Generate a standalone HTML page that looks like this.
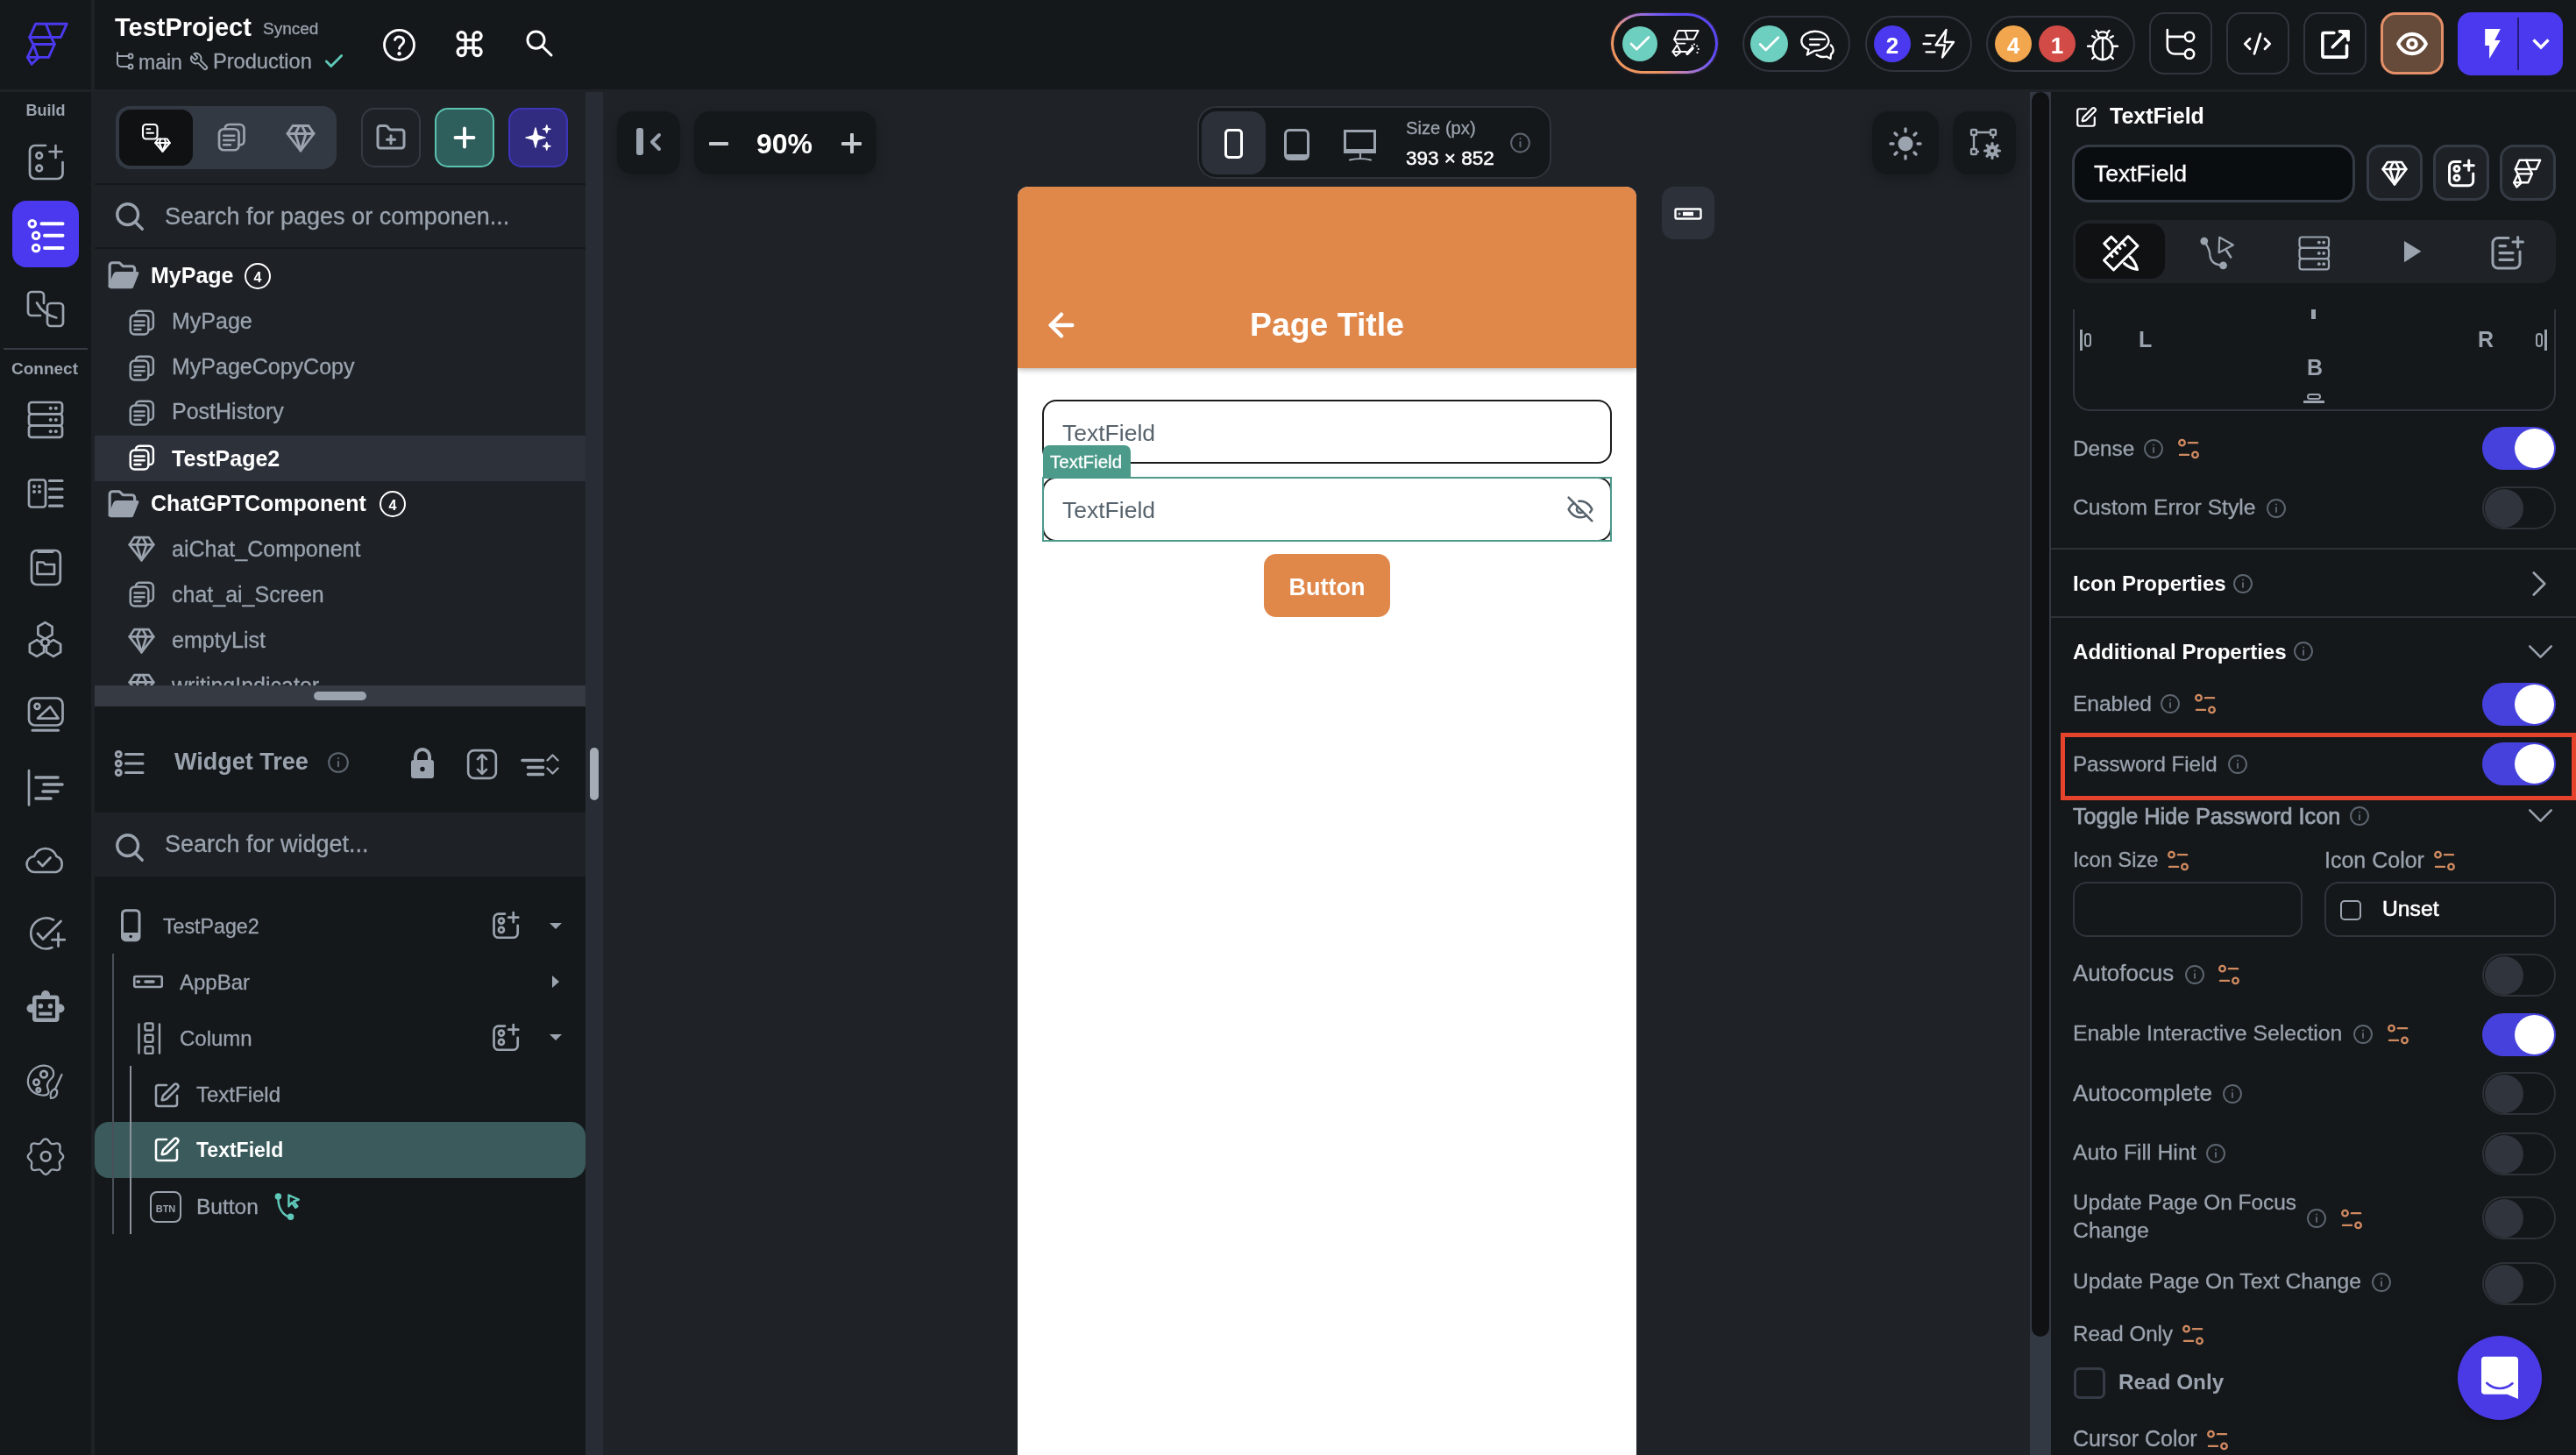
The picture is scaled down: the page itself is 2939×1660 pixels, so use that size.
<!DOCTYPE html>
<html><head><meta charset="utf-8"><style>
html,body{margin:0;padding:0;width:2939px;height:1660px;overflow:hidden;background:#15181b}
.a{position:absolute}
.t{font-family:"Liberation Sans",sans-serif;white-space:nowrap;line-height:1;will-change:transform}
svg{overflow:visible}
</style></head><body>
<div class="a" style="left:0px;top:0px;width:2939px;height:1660px;background:#15181b;"></div>
<div class="a" style="left:104px;top:102px;width:564px;height:1558px;background:#1e2227;"></div>
<div class="a" style="left:104px;top:0px;width:4px;height:102px;background:#1e2227;"></div>
<div class="a" style="left:0px;top:102px;width:2939px;height:3px;background:#1f2328;"></div>
<div class="a" style="left:668px;top:105px;width:20px;height:1555px;background:#282c34;"></div>
<div class="a" style="left:688px;top:102px;width:1628px;height:1558px;background:#1f2328;"></div>
<div class="a" style="left:2316px;top:105px;width:24px;height:1555px;background:#333943;"></div>
<div class="a" style="left:2318px;top:105px;width:20px;height:1420px;background:#0f1113;border-radius:10px;"></div>
<div class="a" style="left:2340px;top:105px;width:599px;height:1555px;background:#15181b;"></div>
<svg class="a" style="left:25px;top:20px;" width="60" height="60" viewBox="0 0 60 60"><g fill="none" stroke="#4b39ef" stroke-width="2.9" stroke-linecap="round" stroke-linejoin="round"><path d="M15.7 7.2H51.2L44.3 22.5H8.7Z"/><path d="M27.4 7.2 33.4 22.5"/><path d="M8.7 22.5 12.8 30.5H37.3L33.4 22.5"/><path d="M37.3 30.5 30.5 45.4H6.4L12.8 32"/><path d="M13.6 32.6 18.4 45.4"/><path d="M6.4 45.4 11.1 53.2 18.4 46.2"/></g></svg>
<div class="a t" style="left:131px;top:16.5px;font-size:29px;color:#ffffff;font-weight:700;">TestProject</div>
<div class="a t" style="left:300px;top:22.9px;font-size:19px;color:#9aa3ae;-webkit-text-stroke:0.3px #9aa3ae;">Synced</div>
<svg class="a" style="left:130px;top:58px;" width="24" height="24" viewBox="0 0 24 24"><g fill="none" stroke="#9aa3ae" stroke-width="2" stroke-linecap="round" stroke-linejoin="round"><path d="M4 2v12a4 4 0 0 0 4 4h9"/><path d="M4 6h13"/><circle cx="19" cy="6" r="2.5"/><circle cx="19" cy="18" r="2.5"/></g></svg>
<div class="a t" style="left:158px;top:59.5px;font-size:23px;color:#9aa3ae;-webkit-text-stroke:0.3px #9aa3ae;">main</div>
<svg class="a" style="left:216px;top:59px;" width="23" height="23" viewBox="0 0 24 24"><g fill="none" stroke="#9aa3ae" stroke-width="2" stroke-linecap="round" stroke-linejoin="round"><g transform="translate(24,0) scale(-1,1)"><path d="M14.7 6.3a1 1 0 0 0 0 1.4l1.6 1.6a1 1 0 0 0 1.4 0l3.77-3.77a6 6 0 0 1-7.94 7.94l-6.91 6.91a2.12 2.12 0 0 1-3-3l6.91-6.91a6 6 0 0 1 7.94-7.94l-3.76 3.76z"/></g></g></svg>
<div class="a t" style="left:243px;top:59.0px;font-size:23.6px;color:#9aa3ae;-webkit-text-stroke:0.3px #9aa3ae;">Production</div>
<svg class="a" style="left:368px;top:57px;" width="26" height="26" viewBox="0 0 24 24"><g fill="none" stroke="#5fc9b9" stroke-width="2.6" stroke-linecap="round" stroke-linejoin="round"><path d="M20 6 9 17l-5-5"/></g></svg>
<svg class="a" style="left:420px;top:20px" width="230" height="65" viewBox="420 20 230 65"><g fill="none" stroke="#fff" stroke-linecap="round" stroke-linejoin="round"><circle cx="455.5" cy="51.3" r="17" stroke-width="2.8"/><path d="M450.5 45.5a5.3 5.3 0 0 1 10.3 1.6c0 3.6-5.3 4.6-5.3 8.2" stroke-width="2.8"/><circle cx="455.6" cy="61.3" r="2.2" fill="#fff" stroke="none"/><g transform="translate(517.6 32.1) scale(1.5)"><path d="M15 6v12a3 3 0 1 0 3-3H6a3 3 0 1 0 3 3V6a3 3 0 1 0-3 3h12a3 3 0 1 0-3-3" stroke-width="2.2"/></g><circle cx="611.5" cy="45.6" r="9.6" stroke-width="2.9"/><path d="M618.6 52.7 629 63" stroke-width="3"/></g></svg>
<div class="a" style="left:1838px;top:15px;width:122px;height:69px;border-radius:35px;background:linear-gradient(45deg,#f39a5a 0%,#ee9462 30%,#b77fc0 45%,#7b5ef0 62%,#5b48f5 75%,#5b48f5 100%);box-shadow:0 0 3px rgba(170,120,200,.3)"></div>
<div class="a" style="left:1841px;top:18px;width:116px;height:63px;background:#15181b;border-radius:32px;"></div>
<div class="a" style="left:1851px;top:30px;width:40px;height:40px;border-radius:50%;background:#6dcfbf"></div>
<svg class="a" style="left:1856px;top:35px;" width="30" height="30" viewBox="0 0 24 24"><g fill="none" stroke="#ffffff" stroke-width="2.1" stroke-linecap="round" stroke-linejoin="round"><path d="M20 6 9 17l-5-5"/></g></svg>
<svg class="a" style="left:1900px;top:30px" width="45" height="40" viewBox="0 0 45 40"><g fill="none" stroke="#fff" stroke-width="1.9" stroke-linecap="round" stroke-linejoin="round"><path d="M14.6 5H37.6L32.5 14.8H10.1Z"/><path d="M22.5 5 25.6 14.8"/><path d="M10.1 14.8 13.2 19.6H22.5"/><path d="M13.4 21.5 8.4 29H24"/><path d="M13.6 21.8 17.3 29"/><path d="M8.4 29 12.2 33.8 17.3 29.5"/><path d="M25 31.2 31 25" stroke-width="3.6"/></g><g fill="#fff"><circle cx="33" cy="20.5" r="1.1"/><circle cx="36.2" cy="22.5" r="1.1"/><circle cx="37.8" cy="26" r="1.1"/><circle cx="36.5" cy="30" r="1.1"/><circle cx="30.5" cy="22" r="1.1"/></g></svg>
<div class="a" style="left:1988px;top:18px;width:123px;height:64px;border:2px solid #30353d;box-sizing:border-box;border-radius:32px;"></div>
<div class="a" style="left:1997px;top:29px;width:43px;height:42px;border-radius:50%;background:#6dcfbf"></div>
<svg class="a" style="left:2003px;top:35px;" width="31" height="31" viewBox="0 0 24 24"><g fill="none" stroke="#ffffff" stroke-width="2.1" stroke-linecap="round" stroke-linejoin="round"><path d="M20 6 9 17l-5-5"/></g></svg>
<svg class="a" style="left:2054px;top:32px" width="42" height="38" viewBox="0 0 42 38"><g fill="none" stroke="#fff" stroke-width="2.3" stroke-linecap="round" stroke-linejoin="round"><path d="M9.5 24.5A15.5 11 0 1 1 16.5 25.8L7.8 30.6Z"/><path d="M11 12.8H28M11 19H21.4"/><path d="M34.8 19.5C38.5 22.5 38.5 27.5 35 30L34.5 35 30 32.5C26 33.5 22 33 18.5 30.5"/></g></svg>
<div class="a" style="left:2128px;top:18px;width:122px;height:64px;border:2px solid #30353d;box-sizing:border-box;border-radius:32px;"></div>
<div class="a" style="left:2138px;top:29px;width:42px;height:42px;border-radius:50%;background:#4b39ef"></div>
<div class="a t" style="left:1159px;width:2000px;text-align:center;top:39.0px;font-size:26px;color:#ffffff;font-weight:700;">2</div>
<svg class="a" style="left:2190px;top:30px" width="44" height="40" viewBox="0 0 44 40"><g fill="none" stroke="#fff" stroke-width="2.3" stroke-linecap="round" stroke-linejoin="round"><path d="M30.5 4 18.5 21.5H29L26 35.5 39 18H28.5Z"/><path d="M7.5 10.5H17.5M4.5 20H12.5M7.5 29.3H17.5"/></g></svg>
<div class="a" style="left:2266px;top:18px;width:170px;height:64px;border:2px solid #30353d;box-sizing:border-box;border-radius:32px;"></div>
<div class="a" style="left:2276px;top:29px;width:42px;height:42px;border-radius:50%;background:#f2a64e"></div>
<div class="a t" style="left:1297px;width:2000px;text-align:center;top:39.0px;font-size:26px;color:#ffffff;font-weight:700;">4</div>
<div class="a" style="left:2326px;top:29px;width:42px;height:42px;border-radius:50%;background:#d24b47"></div>
<div class="a t" style="left:1347px;width:2000px;text-align:center;top:39.0px;font-size:26px;color:#ffffff;font-weight:700;">1</div>
<svg class="a" style="left:2378px;top:30px" width="42" height="42" viewBox="0 0 42 42"><g fill="none" stroke="#fff" stroke-width="2.4" stroke-linecap="round" stroke-linejoin="round"><ellipse cx="21" cy="25.5" rx="11.3" ry="12.5"/><ellipse cx="21" cy="9.8" rx="5.3" ry="3.4"/><path d="M21 13.5V37.5"/><path d="M13.6 5 16 8M28.4 5 26 8M9.2 11.2 12.3 12.9M32.8 11.2 29.7 12.9M4 22.8H9.5M38 22.8H32.5M9.2 36.9 12.3 34.2M32.8 36.9 29.7 34.2"/></g></svg>
<div class="a" style="left:2452px;top:14px;width:72px;height:71px;border:2px solid #30353d;box-sizing:border-box;border-radius:17px;"></div>
<div class="a" style="left:2540px;top:14px;width:72px;height:71px;border:2px solid #30353d;box-sizing:border-box;border-radius:17px;"></div>
<div class="a" style="left:2628px;top:14px;width:72px;height:71px;border:2px solid #30353d;box-sizing:border-box;border-radius:17px;"></div>
<svg class="a" style="left:2460px;top:25px" width="50" height="50" viewBox="2460 25 50 50"><g fill="none" stroke="#fff" stroke-width="2.6" stroke-linecap="round"><path d="M2472.8 34V53.5a8 8 0 0 0 8 8H2492.7M2472.8 41.9H2492.7"/><circle cx="2498" cy="41.9" r="5.2"/><circle cx="2498" cy="61.6" r="5.2"/></g></svg>
<svg class="a" style="left:2557px;top:33px;" width="37" height="34" viewBox="0 0 24 24"><g fill="none" stroke="#ffffff" stroke-width="2" stroke-linecap="round" stroke-linejoin="round"><path d="m18 16 4-4-4-4"/><path d="m6 8-4 4 4 4"/><path d="m14.5 4-5 16"/></g></svg>
<svg class="a" style="left:2645px;top:31px;" width="39" height="39" viewBox="0 0 24 24"><g fill="none" stroke="#ffffff" stroke-width="2.2" stroke-linecap="round" stroke-linejoin="round"><path d="M15 3h6v6" fill="#fff"/><path d="M10 14 21 3"/><path d="M20 13v7a1 1 0 0 1-1 1H4a1 1 0 0 1-1-1V5a1 1 0 0 1 1-1h7"/></g></svg>
<div class="a" style="left:2716px;top:14px;width:72px;height:71px;background:#664a3a;border:3px solid #e39068;box-sizing:border-box;border-radius:17px;"></div>
<svg class="a" style="left:2733px;top:31px;" width="38" height="38" viewBox="0 0 24 24"><g fill="none" stroke="#ffffff" stroke-width="2.6" stroke-linecap="round" stroke-linejoin="round"><path d="M2 12s3-7 10-7 10 7 10 7-3 7-10 7-10-7-10-7Z"/><circle cx="12" cy="12" r="3"/></g></svg>
<div class="a" style="left:2804px;top:14px;width:120px;height:72px;background:#4b39ef;border-radius:15px;"></div>
<div class="a" style="left:2872px;top:20px;width:2px;height:60px;background:#241c7a;"></div>
<svg class="a" style="left:0;top:0" width="2939" height="100" viewBox="0 0 2939 100"><path d="M2835.2 33.1H2852.8L2846.2 46H2852.8L2840.1 66.9V52.1H2835.2Z" fill="#fff"/><path d="M2890.5 45.5 2899 54 2907.5 45.5" fill="none" stroke="#fff" stroke-width="3.4"/></svg>
<div class="a t" style="left:-948px;width:2000px;text-align:center;top:116.8px;font-size:18px;color:#9aa3ae;font-weight:700;">Build</div>
<div class="a" style="left:14px;top:229px;width:76px;height:76px;background:#4b39ef;border-radius:16px;"></div>
<div class="a" style="left:4px;top:397px;width:96px;height:2px;background:#353b44;"></div>
<div class="a t" style="left:-949px;width:2000px;text-align:center;top:410.9px;font-size:19px;color:#9aa3ae;font-weight:700;">Connect</div>
<svg class="a" style="left:0;top:0" width="104" height="1660" viewBox="0 0 104 1660"><g fill="none" stroke="#9aa3ae" stroke-width="2.7" stroke-linecap="round" stroke-linejoin="round">
<path d="M52 166H40a6 6 0 0 0-6 6V198a6 6 0 0 0 6 6H65.5a6 6 0 0 0 6-6V185"/><path d="M63.5 166v14M56.5 173h14" stroke-width="2.6"/><circle cx="44.7" cy="177.5" r="3.3"/><circle cx="44.7" cy="192" r="3.3"/>
<path d="M46 360H36a4 4 0 0 1-4-4V337a4 4 0 0 1 4-4H46a4 4 0 0 1 4 4V346"/><rect x="54" y="346" width="18" height="26" rx="4"/><path d="M42 345.5C46 353 54 360 64.3 362.5"/>
<rect x="33" y="459" width="38" height="13.3" rx="3"/><rect x="33" y="472.3" width="38" height="13.3" rx="3"/><rect x="33" y="485.6" width="38" height="13.3" rx="3"/>
<rect x="33" y="547.5" width="19" height="31" rx="3"/><path d="M56.5 548.5H71M56.5 558H71M56.5 567.4H71M56.5 577.2H71" stroke-width="3.2"/>
<rect x="36" y="628" width="32.8" height="39" rx="6"/><path d="M44 629.5H60" stroke-width="3"/><path d="M42.5 655V641.5H49.5L51.5 644H62V655Z"/>
<polygon points="51.5,710.2 59.6,714.9 59.6,724.1 51.5,728.8 43.4,724.1 43.4,714.9"/><polygon points="42.0,730.2 50.1,734.9 50.1,744.1 42.0,748.8 33.9,744.1 33.9,734.9" /><polygon points="61.0,730.2 69.1,734.9 69.1,744.1 61.0,748.8 52.9,744.1 52.9,734.9"/><polygon points="51.5,728.4 55.5,730.7 55.5,735.3 51.5,737.6 47.5,735.3 47.5,730.7" fill="#15181b"/>
<rect x="33" y="796.5" width="38.5" height="31" rx="7"/><circle cx="42.4" cy="805.8" r="3"/><path d="M43 819.6 57.2 806.2 66.5 819.6Z"/><path d="M37 833.3H66.5" stroke-width="3"/>
<path d="M33 879V918.5"/><path d="M41 887H66M50 895H71M49 903H66M41 911H58" stroke-width="3.6"/>
<path d="M40 995A9 9 0 0 1 39 977A13.5 13.5 0 0 1 64.5 977A9.5 9.5 0 0 1 64 995Z" stroke-width="2.6"/><path d="M43.5 983 48.5 988 57.5 978.5" stroke-width="2.8"/>
<path d="M61 1049.5A17.5 17.5 0 1 0 59.5 1081" stroke-width="2.6"/><path d="M43 1065 49 1071.5 69.5 1051" stroke-width="2.8"/><path d="M66.5 1065v14.5M59.5 1072.2H73.8" stroke-width="2.8"/>
<path d="M45 1249C35 1247 30 1238 32.5 1229C35.5 1219 46 1213.5 55 1216.5C62 1219 63 1227 58 1231C54 1234.5 53 1239 55 1243.5C57 1248 53 1251 45 1249Z" stroke-width="2.2"/><circle cx="50" cy="1225.7" r="3.8"/><circle cx="41.5" cy="1234.7" r="3.2"/><circle cx="43.8" cy="1243.6" r="2.2"/><path d="M70.5 1226 63 1242.5M58 1253c5 0 8-4 7-9l-3-1.5c-4 2-5 6-4 10.5z" stroke-width="2.2"/>
<circle cx="52.2" cy="1319.3" r="5.3"/><path d="M52.2 1299.5c3.5 0 4 4.5 6.5 5.5 2.5 1 5.5-2 8.5 0 3 2.5.5 6.5 1 8.5.5 2.5 4.5 3.5 4 6.5-.5 3-4 3.5-4.5 6-.5 2.5 2.5 6-.5 8.5-3 2-6-1-8.5 0-2.5 1-3 5.5-6.5 5.5s-4-4.5-6.5-5.5c-2.5-1-5.5 2-8.5 0-3-2.5-.5-6-1-8.5-.5-2.5-4-3-4.5-6-.5-3 3.5-4 4-6.5.5-2-2-6 1-8.5 3-2 6 1 8.5 0 2.5-1 3-5.5 6.5-5.5z" stroke-width="2.3"/>
</g><g fill="#9aa3ae"><circle cx="57.7" cy="465.7" r="2"/><circle cx="63.8" cy="465.7" r="2"/><circle cx="57.7" cy="479" r="2"/><circle cx="63.8" cy="479" r="2"/><circle cx="57.7" cy="492.3" r="2"/><circle cx="63.8" cy="492.3" r="2"/>
<circle cx="39" cy="555" r="2"/><circle cx="45" cy="555" r="2"/><circle cx="39" cy="561" r="2"/><circle cx="45" cy="561" r="2"/>
<path d="M41 1135.5H63.5a4 4 0 0 1 4 4V1162a4 4 0 0 1-4 4H41a4 4 0 0 1-4-4V1139.5a4 4 0 0 1 4-4Z"/><circle cx="52" cy="1135" r="5"/><circle cx="35.5" cy="1150.5" r="5"/><circle cx="68.5" cy="1150.5" r="5"/>
</g><g fill="#15181b"><rect x="41.5" y="1140" width="21.5" height="21.5"/></g><g fill="#9aa3ae"><circle cx="46.3" cy="1147.8" r="2.8"/><circle cx="57.5" cy="1147.8" r="2.8"/><rect x="44.3" y="1154.6" width="15" height="4"/></g>
<g fill="none" stroke="#fff" stroke-width="3" stroke-linecap="round"><circle cx="36.8" cy="255.3" r="3.8"/><circle cx="41.1" cy="268.8" r="3.8"/><circle cx="41.1" cy="283" r="3.8"/><path d="M47.5 255.3H71.5M51 268.8H71.5M51 283H71.5" stroke-width="4"/></g>
</svg>
<div class="a" style="left:132px;top:121px;width:252px;height:72px;background:#333942;border-radius:16px;"></div>
<div class="a" style="left:136px;top:125px;width:84px;height:64px;background:#0f1113;border-radius:13px;"></div>
<svg class="a" style="left:160px;top:139px;" width="36" height="36" viewBox="0 0 24 24"><g fill="none" stroke="#ffffff" stroke-width="1.4" stroke-linecap="round" stroke-linejoin="round"><rect x="2" y="2" width="11" height="11" rx="2.5"/><path d="M5 5.5h2.5M5 8.5h5"/><path d="M13.5 13h7l2 3-5.5 6.5L11.5 16z"/><path d="M11.5 16h11"/><path d="M15.5 13 14.5 16l2.5 6.5 2.5-6.5-1-3"/></g></svg>
<svg class="a" style="left:247px;top:139px;" width="36" height="36" viewBox="0 0 24 24"><g fill="none" stroke="#9aa3ae" stroke-width="1.8" stroke-linecap="round" stroke-linejoin="round"><rect x="2" y="5.5" width="15" height="16" rx="3.5"/><path d="M6.5 5.5V5a3 3 0 0 1 3-3h8a3.5 3.5 0 0 1 3.5 3.5v9a3 3 0 0 1-3 3h-1"/><path d="M5.5 10.5h8"/><path d="M5.5 14h8"/><path d="M5.5 17.5h5"/></g></svg>
<svg class="a" style="left:325px;top:139px;" width="36" height="36" viewBox="0 0 24 24"><g fill="none" stroke="#9aa3ae" stroke-width="1.9" stroke-linecap="round" stroke-linejoin="round"><path d="M6 3h12l4 6-10 13L2 9Z"/><path d="M11 3 8 9l4 13 4-13-3-6"/><path d="M2 9h20"/></g></svg>
<div class="a" style="left:412px;top:123px;width:68px;height:68px;border:2px solid #353a42;box-sizing:border-box;border-radius:15px;"></div>
<svg class="a" style="left:428px;top:139px;" width="36" height="36" viewBox="0 0 24 24"><g fill="none" stroke="#9aa3ae" stroke-width="2" stroke-linecap="round" stroke-linejoin="round"><path d="M12 10.5v6"/><path d="M9 13.5h6"/><path d="M20 20a2 2 0 0 0 2-2V8a2 2 0 0 0-2-2h-7.9a2 2 0 0 1-1.69-.9L9.6 3.9A2 2 0 0 0 7.93 3H4a2 2 0 0 0-2 2v13a2 2 0 0 0 2 2Z"/></g></svg>
<div class="a" style="left:496px;top:123px;width:68px;height:68px;background:#2f5f5c;border:2.5px solid #5cc2b0;box-sizing:border-box;border-radius:15px;"></div>
<svg class="a" style="left:512px;top:139px;" width="36" height="36" viewBox="0 0 24 24"><g fill="none" stroke="#ffffff" stroke-width="2.6" stroke-linecap="round" stroke-linejoin="round"><path d="M5 12h14"/><path d="M12 5v14"/></g></svg>
<div class="a" style="left:580px;top:123px;width:68px;height:68px;background:#322c80;border:2.5px solid #3d35b8;box-sizing:border-box;border-radius:15px;"></div>
<svg class="a" style="left:596px;top:139px;" width="36" height="36" viewBox="0 0 24 24"><g fill="none" stroke="#ffffff" stroke-width="0.8" stroke-linecap="round" stroke-linejoin="round"><path d="M10 4.5 11.6 10.4 17.5 12 11.6 13.6 10 19.5 8.4 13.6 2.5 12 8.4 10.4z" fill="#fff"/><path d="M18.5 2.5 19.2 4.8 21.5 5.5 19.2 6.2 18.5 8.5 17.8 6.2 15.5 5.5 17.8 4.8z" fill="#fff"/><path d="M18.5 15.5 19.2 17.8 21.5 18.5 19.2 19.2 18.5 21.5 17.8 19.2 15.5 18.5 17.8 17.8z" fill="#fff"/></g></svg>
<div class="a" style="left:108px;top:209px;width:560px;height:2px;background:#15181b;"></div>
<svg class="a" style="left:129px;top:228px;" width="38" height="38" viewBox="0 0 24 24"><g fill="none" stroke="#9aa3ae" stroke-width="2.1" stroke-linecap="round" stroke-linejoin="round"><circle cx="10.5" cy="10.5" r="7.5"/><path d="m21 21-5.2-5.2"/></g></svg>
<div class="a t" style="left:188px;top:234.1px;font-size:27px;color:#9aa3ae;-webkit-text-stroke:0.3px #9aa3ae;">Search for pages or componen...</div>
<div class="a" style="left:108px;top:282px;width:560px;height:2px;background:#15181b;"></div>
<svg class="a" style="left:122px;top:295px;" width="38" height="38" viewBox="0 0 24 24"><g fill="none" stroke="#9aa3ae" stroke-width="2" stroke-linecap="round" stroke-linejoin="round"><path d="M2 20V5a2 2 0 0 1 2-2h5l2.5 2.5H18a2 2 0 0 1 2 2V10" fill="none"/><path d="M2 20 5.5 11.5a1.5 1.5 0 0 1 1.4-1H22l-3.8 9.5a1 1 0 0 1-1 .7H3z" fill="#9aa3ae"/></g></svg>
<div class="a t" style="left:172px;top:301.8px;font-size:25px;color:#ffffff;font-weight:700;">MyPage</div>
<div class="a" style="left:279px;top:300px;width:30px;height:30px;border-radius:50%;border:2.5px solid #fff;box-sizing:border-box"></div>
<div class="a t" style="left:-706px;width:2000px;text-align:center;top:308.5px;font-size:16px;color:#ffffff;font-weight:700;">4</div>
<svg class="a" style="left:146px;top:352px;" width="33" height="33" viewBox="0 0 24 24"><g fill="none" stroke="#9aa3ae" stroke-width="1.8" stroke-linecap="round" stroke-linejoin="round"><rect x="2" y="5.5" width="15" height="16" rx="3.5"/><path d="M6.5 5.5V5a3 3 0 0 1 3-3h8a3.5 3.5 0 0 1 3.5 3.5v9a3 3 0 0 1-3 3h-1"/><path d="M5.5 10.5h8"/><path d="M5.5 14h8"/><path d="M5.5 17.5h5"/></g></svg>
<div class="a t" style="left:196px;top:353.8px;font-size:25px;color:#9aa3ae;-webkit-text-stroke:0.3px #9aa3ae;">MyPage</div>
<svg class="a" style="left:146px;top:404px;" width="33" height="33" viewBox="0 0 24 24"><g fill="none" stroke="#9aa3ae" stroke-width="1.8" stroke-linecap="round" stroke-linejoin="round"><rect x="2" y="5.5" width="15" height="16" rx="3.5"/><path d="M6.5 5.5V5a3 3 0 0 1 3-3h8a3.5 3.5 0 0 1 3.5 3.5v9a3 3 0 0 1-3 3h-1"/><path d="M5.5 10.5h8"/><path d="M5.5 14h8"/><path d="M5.5 17.5h5"/></g></svg>
<div class="a t" style="left:196px;top:405.8px;font-size:25px;color:#9aa3ae;-webkit-text-stroke:0.3px #9aa3ae;">MyPageCopyCopy</div>
<svg class="a" style="left:146px;top:455px;" width="33" height="33" viewBox="0 0 24 24"><g fill="none" stroke="#9aa3ae" stroke-width="1.8" stroke-linecap="round" stroke-linejoin="round"><rect x="2" y="5.5" width="15" height="16" rx="3.5"/><path d="M6.5 5.5V5a3 3 0 0 1 3-3h8a3.5 3.5 0 0 1 3.5 3.5v9a3 3 0 0 1-3 3h-1"/><path d="M5.5 10.5h8"/><path d="M5.5 14h8"/><path d="M5.5 17.5h5"/></g></svg>
<div class="a t" style="left:196px;top:456.8px;font-size:25px;color:#9aa3ae;-webkit-text-stroke:0.3px #9aa3ae;">PostHistory</div>
<div class="a" style="left:108px;top:497px;width:560px;height:52px;background:#2c313a;"></div>
<svg class="a" style="left:146px;top:506px;" width="33" height="33" viewBox="0 0 24 24"><g fill="none" stroke="#ffffff" stroke-width="1.8" stroke-linecap="round" stroke-linejoin="round"><rect x="2" y="5.5" width="15" height="16" rx="3.5"/><path d="M6.5 5.5V5a3 3 0 0 1 3-3h8a3.5 3.5 0 0 1 3.5 3.5v9a3 3 0 0 1-3 3h-1"/><path d="M5.5 10.5h8"/><path d="M5.5 14h8"/><path d="M5.5 17.5h5"/></g></svg>
<div class="a t" style="left:196px;top:510.8px;font-size:25px;color:#ffffff;font-weight:700;">TestPage2</div>
<svg class="a" style="left:122px;top:556px;" width="38" height="38" viewBox="0 0 24 24"><g fill="none" stroke="#9aa3ae" stroke-width="2" stroke-linecap="round" stroke-linejoin="round"><path d="M2 20V5a2 2 0 0 1 2-2h5l2.5 2.5H18a2 2 0 0 1 2 2V10" fill="none"/><path d="M2 20 5.5 11.5a1.5 1.5 0 0 1 1.4-1H22l-3.8 9.5a1 1 0 0 1-1 .7H3z" fill="#9aa3ae"/></g></svg>
<div class="a t" style="left:172px;top:562.3px;font-size:25px;color:#ffffff;font-weight:700;">ChatGPTComponent</div>
<div class="a" style="left:433px;top:560px;width:30px;height:30px;border-radius:50%;border:2.5px solid #fff;box-sizing:border-box"></div>
<div class="a t" style="left:-552px;width:2000px;text-align:center;top:568.5px;font-size:16px;color:#ffffff;font-weight:700;">4</div>
<svg class="a" style="left:145px;top:609px;" width="33" height="33" viewBox="0 0 24 24"><g fill="none" stroke="#9aa3ae" stroke-width="1.9" stroke-linecap="round" stroke-linejoin="round"><path d="M6 3h12l4 6-10 13L2 9Z"/><path d="M11 3 8 9l4 13 4-13-3-6"/><path d="M2 9h20"/></g></svg>
<div class="a t" style="left:196px;top:614.3px;font-size:25px;color:#9aa3ae;-webkit-text-stroke:0.3px #9aa3ae;">aiChat_Component</div>
<svg class="a" style="left:146px;top:662px;" width="33" height="33" viewBox="0 0 24 24"><g fill="none" stroke="#9aa3ae" stroke-width="1.8" stroke-linecap="round" stroke-linejoin="round"><rect x="2" y="5.5" width="15" height="16" rx="3.5"/><path d="M6.5 5.5V5a3 3 0 0 1 3-3h8a3.5 3.5 0 0 1 3.5 3.5v9a3 3 0 0 1-3 3h-1"/><path d="M5.5 10.5h8"/><path d="M5.5 14h8"/><path d="M5.5 17.5h5"/></g></svg>
<div class="a t" style="left:196px;top:665.8px;font-size:25px;color:#9aa3ae;-webkit-text-stroke:0.3px #9aa3ae;">chat_ai_Screen</div>
<svg class="a" style="left:145px;top:714px;" width="33" height="33" viewBox="0 0 24 24"><g fill="none" stroke="#9aa3ae" stroke-width="1.9" stroke-linecap="round" stroke-linejoin="round"><path d="M6 3h12l4 6-10 13L2 9Z"/><path d="M11 3 8 9l4 13 4-13-3-6"/><path d="M2 9h20"/></g></svg>
<div class="a t" style="left:196px;top:717.8px;font-size:25px;color:#9aa3ae;-webkit-text-stroke:0.3px #9aa3ae;">emptyList</div>
<div class="a" style="left:108px;top:760px;width:560px;height:22px;overflow:hidden">
<svg class="a" style="left:37px;top:6px;" width="33" height="33" viewBox="0 0 24 24"><g fill="none" stroke="#9aa3ae" stroke-width="1.9" stroke-linecap="round" stroke-linejoin="round"><path d="M6 3h12l4 6-10 13L2 9Z"/><path d="M11 3 8 9l4 13 4-13-3-6"/><path d="M2 9h20"/></g></svg>
<div class="a t" style="left:88px;top:9.8px;font-size:25px;color:#9aa3ae;-webkit-text-stroke:0.3px #9aa3ae;">writingIndicator</div>
</div>
<div class="a" style="left:108px;top:782px;width:560px;height:24px;background:#353a43;"></div>
<div class="a" style="left:358px;top:789px;width:60px;height:10px;background:#9aa3ae;border-radius:5px;"></div>
<div class="a" style="left:108px;top:806px;width:560px;height:121px;background:#15181b;"></div>
<svg class="a" style="left:127px;top:853px;" width="42" height="36" viewBox="0 0 24 24"><g fill="none" stroke="#9aa3ae" stroke-width="2" stroke-linecap="round" stroke-linejoin="round"><circle cx="3.5" cy="5" r="2"/><circle cx="3.5" cy="12" r="2"/><circle cx="3.5" cy="19" r="2"/><path d="M9 5h13M9 12h13M9 19h13"/></g></svg>
<div class="a t" style="left:199px;top:855.6px;font-size:27px;color:#9aa3ae;font-weight:700;">Widget Tree</div>
<svg class="a" style="left:373px;top:857px;" width="26" height="26" viewBox="0 0 24 24"><g fill="none" stroke="#5d6670" stroke-width="1.9" stroke-linecap="round" stroke-linejoin="round"><circle cx="12" cy="12" r="10"/><path d="M12 16v-5"/><path d="M12 7.5h.01"/></g></svg>
<svg class="a" style="left:466px;top:852px" width="32" height="38" viewBox="0 0 32 38"><path d="M8 16V11a8 8 0 0 1 16 0v5" fill="none" stroke="#9aa3ae" stroke-width="4"/><rect x="3" y="15" width="26" height="21" rx="3" fill="#9aa3ae"/><circle cx="16" cy="25.5" r="2.7" fill="#15181b"/></svg>
<svg class="a" style="left:530px;top:852px;" width="40" height="40" viewBox="0 0 24 24"><g fill="none" stroke="#9aa3ae" stroke-width="1.6" stroke-linecap="round" stroke-linejoin="round"><rect x="2.5" y="2.5" width="19" height="19" rx="4"/><path d="M12 6v12M9 8.5 12 5.5l3 3M9 15.5l3 3 3-3"/></g></svg>
<svg class="a" style="left:590px;top:855px" width="50" height="34" viewBox="590 855 50 34"><g fill="none" stroke="#9aa3ae" stroke-linecap="round" stroke-linejoin="round"><path d="M596 867.5H619.5M602.5 875.5H619.5M602.5 883.5H619.5" stroke-width="3.6"/><path d="M624.5 867.5 630.5 861.5 636.5 867.5M624.5 876.5 630.5 882.5 636.5 876.5" stroke-width="2.4"/></g></svg>
<div class="a" style="left:673px;top:853px;width:10px;height:60px;background:#a5acb5;border-radius:5px;"></div>
<div class="a" style="left:108px;top:927px;width:560px;height:73px;background:#1e2227;"></div>
<div class="a" style="left:108px;top:1000px;width:560px;height:660px;background:#15181b;"></div>
<svg class="a" style="left:129px;top:948px;" width="38" height="38" viewBox="0 0 24 24"><g fill="none" stroke="#9aa3ae" stroke-width="2.1" stroke-linecap="round" stroke-linejoin="round"><circle cx="10.5" cy="10.5" r="7.5"/><path d="m21 21-5.2-5.2"/></g></svg>
<div class="a t" style="left:188px;top:950.1px;font-size:27px;color:#9aa3ae;-webkit-text-stroke:0.3px #9aa3ae;">Search for widget...</div>
<svg class="a" style="left:136px;top:1035px" width="28" height="42" viewBox="136 1035 28 42"><rect x="139.5" y="1038.7" width="19.5" height="34" rx="4" fill="none" stroke="#9aa3ae" stroke-width="3"/><rect x="139.5" y="1064" width="19.5" height="8.5" rx="2" fill="#9aa3ae"/><circle cx="149.2" cy="1068.5" r="1.8" fill="#15181b"/></svg>
<div class="a t" style="left:186px;top:1045.9px;font-size:23.2px;color:#9aa3ae;-webkit-text-stroke:0.3px #9aa3ae;">TestPage2</div>
<svg class="a" style="left:561px;top:1039px;" width="36" height="36" viewBox="0 0 24 24"><g fill="none" stroke="#9aa3ae" stroke-width="1.8" stroke-linecap="round" stroke-linejoin="round"><path d="M10 2.4H5.2a3.5 3.5 0 0 0-3.5 3.5V17a3.5 3.5 0 0 0 3.5 3.5H16.3a3.5 3.5 0 0 0 3.5-3.5V11.3"/><path d="M16.5 1.4v7.4M12.8 5.1h7.4"/><circle cx="7.3" cy="7.7" r="2"/><circle cx="7.3" cy="14.6" r="2"/></g></svg>
<svg class="a" style="left:626px;top:1052px" width="16" height="10" viewBox="0 0 16 10"><path d="M1 1h14L8 8z" fill="#9aa3ae"/></svg>
<svg class="a" style="left:149px;top:1102px;" width="40" height="36" viewBox="0 0 24 24"><g fill="none" stroke="#9aa3ae" stroke-width="1.7" stroke-linecap="round" stroke-linejoin="round"><rect x="1.5" y="8" width="21" height="8" rx="1"/><path d="M4 12h1M10 12h6" stroke-width="2.4"/></g></svg>
<div class="a t" style="left:205px;top:1108.7px;font-size:24px;color:#9aa3ae;-webkit-text-stroke:0.3px #9aa3ae;">AppBar</div>
<svg class="a" style="left:629px;top:1112px" width="10" height="16" viewBox="0 0 10 16"><path d="M1 1v14l8-7z" fill="#9aa3ae"/></svg>
<svg class="a" style="left:154px;top:1165px" width="32" height="40" viewBox="154 1165 32 40"><g fill="none" stroke="#9aa3ae" stroke-width="2.4" stroke-linecap="round"><path d="M158.5 1168.5V1201.5M182 1168.5V1201.5"/><rect x="165.5" y="1167.5" width="9" height="8" rx="1.5"/><rect x="165.5" y="1180.7" width="9" height="8" rx="1.5"/><rect x="165.5" y="1193.9" width="9" height="8" rx="1.5"/></g></svg>
<div class="a t" style="left:205px;top:1172.7px;font-size:24px;color:#9aa3ae;-webkit-text-stroke:0.3px #9aa3ae;">Column</div>
<svg class="a" style="left:561px;top:1167px;" width="36" height="36" viewBox="0 0 24 24"><g fill="none" stroke="#9aa3ae" stroke-width="1.8" stroke-linecap="round" stroke-linejoin="round"><path d="M10 2.4H5.2a3.5 3.5 0 0 0-3.5 3.5V17a3.5 3.5 0 0 0 3.5 3.5H16.3a3.5 3.5 0 0 0 3.5-3.5V11.3"/><path d="M16.5 1.4v7.4M12.8 5.1h7.4"/><circle cx="7.3" cy="7.7" r="2"/><circle cx="7.3" cy="14.6" r="2"/></g></svg>
<svg class="a" style="left:626px;top:1179px" width="16" height="10" viewBox="0 0 16 10"><path d="M1 1h14L8 8z" fill="#9aa3ae"/></svg>
<svg class="a" style="left:174px;top:1234px;" width="32" height="32" viewBox="0 0 24 24"><g fill="none" stroke="#9aa3ae" stroke-width="1.9" stroke-linecap="round" stroke-linejoin="round"><path d="M12 3H5a2 2 0 0 0-2 2v14a2 2 0 0 0 2 2h14a2 2 0 0 0 2-2v-7"/><path d="M18.375 2.625a1 1 0 0 1 3 3l-9.013 9.014a2 2 0 0 1-.853.505l-2.873.84a.5.5 0 0 1-.62-.62l.84-2.873a2 2 0 0 1 .506-.852z"/></g></svg>
<div class="a t" style="left:224px;top:1236.7px;font-size:24px;color:#9aa3ae;-webkit-text-stroke:0.3px #9aa3ae;">TextField</div>
<div class="a" style="left:108px;top:1280px;width:560px;height:64px;background:#3a5a5c;border-radius:16px;"></div>
<div class="a" style="left:128px;top:1088px;width:2px;height:320px;background:#4a5058;"></div>
<div class="a" style="left:147.5px;top:1216px;width:2.0px;height:192px;background:#8a929c;"></div>
<svg class="a" style="left:174px;top:1296px;" width="32" height="32" viewBox="0 0 24 24"><g fill="none" stroke="#ffffff" stroke-width="1.9" stroke-linecap="round" stroke-linejoin="round"><path d="M12 3H5a2 2 0 0 0-2 2v14a2 2 0 0 0 2 2h14a2 2 0 0 0 2-2v-7"/><path d="M18.375 2.625a1 1 0 0 1 3 3l-9.013 9.014a2 2 0 0 1-.853.505l-2.873.84a.5.5 0 0 1-.62-.62l.84-2.873a2 2 0 0 1 .506-.852z"/></g></svg>
<div class="a t" style="left:224px;top:1300.5px;font-size:23px;color:#ffffff;font-weight:700;">TextField</div>
<div class="a" style="left:171px;top:1359px;width:36px;height:36px;border:2px solid #9aa3ae;box-sizing:border-box;border-radius:8px;"></div>
<div class="a t" style="left:-811px;width:2000px;text-align:center;top:1373.7px;font-size:11px;color:#9aa3ae;font-weight:700;">BTN</div>
<div class="a t" style="left:224px;top:1365.3px;font-size:24.5px;color:#9aa3ae;-webkit-text-stroke:0.3px #9aa3ae;">Button</div>
<svg class="a" style="left:311px;top:1360px;" width="34" height="34" viewBox="0 0 24 24"><g fill="none" stroke="#5fc9b9" stroke-width="1.7" stroke-linecap="round" stroke-linejoin="round"><circle cx="4.5" cy="3.5" r="1.8" fill="#5fc9b9"/><path d="M4.5 5c0 5 1 9 4 12s5 3 6 3.5"/><circle cx="14.5" cy="20" r="1.8" fill="#5fc9b9"/><path d="M13 2.5l8 3.5-4 1.5 3 4-1.5 1-3-4-2.5 3z"/></g></svg>
<div class="a" style="left:704px;top:127px;width:72px;height:72px;background:#15181b;border-radius:18px;box-shadow:0 4px 14px rgba(0,0,0,.25);"></div>
<div class="a" style="left:726px;top:146px;width:8px;height:31px;background:#9aa3ae;border-radius:3px;"></div>
<svg class="a" style="left:740px;top:151px" width="16" height="22" viewBox="0 0 16 22"><path d="M12 3 4 11l8 8" fill="none" stroke="#9aa3ae" stroke-width="4" stroke-linecap="round" stroke-linejoin="round"/></svg>
<div class="a" style="left:792px;top:127px;width:208px;height:72px;background:#15181b;border-radius:18px;box-shadow:0 4px 14px rgba(0,0,0,.25);"></div>
<div class="a" style="left:809px;top:162px;width:22px;height:4px;background:#c5cad0;border-radius:1px;"></div>
<div class="a t" style="left:863px;top:147.9px;font-size:32px;color:#ffffff;font-weight:700;">90%</div>
<div class="a" style="left:960px;top:162px;width:23px;height:4px;background:#c5cad0;border-radius:1px;"></div>
<div class="a" style="left:969.5px;top:152px;width:4.0px;height:23px;background:#c5cad0;border-radius:1px;"></div>
<div class="a" style="left:1366px;top:121px;width:404px;height:83px;background:#15181b;border:2px solid #2f343b;box-sizing:border-box;border-radius:22px;"></div>
<div class="a" style="left:1371px;top:127px;width:73px;height:72px;background:#2c3139;border-radius:17px;"></div>
<div class="a" style="left:1397px;top:147px;width:21px;height:34px;border:3px solid #ffffff;box-sizing:border-box;border-radius:5px;"></div>
<div class="a" style="left:1465px;top:147px;width:29px;height:36px;border-radius:6px;border:3px solid #9aa3ae;border-bottom-width:7px;box-sizing:border-box"></div>
<div class="a" style="left:1533px;top:148px;width:37px;height:27px;border:3px solid #9aa3ae;border-bottom-width:5px;box-sizing:border-box"></div>
<svg class="a" style="left:1537px;top:174px" width="30" height="10" viewBox="0 0 30 10"><path d="M15 1v5M3 8.5c8-2 16-2 24 0" fill="none" stroke="#9aa3ae" stroke-width="2.2" stroke-linecap="round"/></svg>
<div class="a t" style="left:1604px;top:135.9px;font-size:20.2px;color:#9aa3ae;-webkit-text-stroke:0.3px #9aa3ae;">Size (px)</div>
<div class="a t" style="left:1604px;top:169.5px;font-size:22.5px;color:#ffffff;-webkit-text-stroke:0.3px #ffffff;-webkit-text-stroke:0.5px #fff;">393 × 852</div>
<svg class="a" style="left:1722px;top:150px;" width="25" height="26" viewBox="0 0 24 24"><g fill="none" stroke="#5d6670" stroke-width="1.9" stroke-linecap="round" stroke-linejoin="round"><circle cx="12" cy="12" r="10"/><path d="M12 16v-5"/><path d="M12 7.5h.01"/></g></svg>
<div class="a" style="left:2136px;top:127px;width:76px;height:72px;background:#15181b;border-radius:18px;box-shadow:0 4px 14px rgba(0,0,0,.25);"></div>
<svg class="a" style="left:2154px;top:144px" width="40" height="40" viewBox="0 0 40 40"><circle cx="20" cy="20" r="8.5" fill="#9aa3ae"/><g stroke="#9aa3ae" stroke-width="3.4" stroke-linecap="round"><path d="M20 3v3M20 34v3M3 20h3M34 20h3M8 8l2 2M30 30l2 2M8 32l2-2M30 10l2-2"/></g></svg>
<div class="a" style="left:2228px;top:127px;width:72px;height:72px;background:#15181b;border-radius:18px;box-shadow:0 4px 14px rgba(0,0,0,.25);"></div>
<svg class="a" style="left:2246px;top:145px" width="38" height="38" viewBox="0 0 38 38"><g fill="none" stroke="#9aa3ae" stroke-width="2.4"><rect x="3" y="3" width="6" height="6" rx="1"/><rect x="25" y="3" width="6" height="6" rx="1"/><rect x="3" y="25" width="6" height="6" rx="1"/><path d="M9 6h16M6 9v16M9 28h3M28 9v4"/></g><circle cx="27" cy="27" r="6.5" fill="#9aa3ae"/><g stroke="#9aa3ae" stroke-width="3.2" stroke-linecap="round"><path d="M27 18.5v2M27 33.5v2M18.5 27h2M33.5 27h2M21 21l1.4 1.4M31.6 31.6 33 33M21 33l1.4-1.4M31.6 22.4 33 21"/></g><circle cx="27" cy="27" r="2" fill="#15181b"/></svg>
<div class="a" style="left:1161px;top:213px;width:706px;height:1460px;border-radius:12px;background:#ffffff;overflow:hidden">
<div class="a" style="left:0;top:0;width:706px;height:207px;background:#e0874a;box-shadow:0 2px 6px rgba(0,0,0,.28)"></div>
</div>
<svg class="a" style="left:1189px;top:350px;" width="44" height="42" viewBox="0 0 24 24"><g fill="none" stroke="#ffffff" stroke-width="2.6" stroke-linecap="round" stroke-linejoin="round"><path d="m12 19-7-7 7-7"/><path d="M19 12H5"/></g></svg>
<div class="a t" style="left:514px;width:2000px;text-align:center;top:352.3px;font-size:37.4px;color:#ffffff;font-weight:700;">Page Title</div>
<div class="a" style="left:1189px;top:456px;width:650px;height:73px;background:#ffffff;border:2px solid #1b1b1b;box-sizing:border-box;border-radius:16px;"></div>
<div class="a t" style="left:1212px;top:480.6px;font-size:26.5px;color:#57636c;-webkit-text-stroke:0.3px #57636c;-webkit-text-stroke:0;">TextField</div>
<div class="a" style="left:1189px;top:544px;width:650px;height:74px;background:#ffffff;border:2px solid #1b1b1b;box-sizing:border-box;border-radius:16px;"></div>
<div class="a" style="left:1189px;top:544px;width:650px;height:74px;border:2.5px solid #4b9a8a;box-sizing:border-box;"></div>
<div class="a t" style="left:1212px;top:568.6px;font-size:26.5px;color:#57636c;-webkit-text-stroke:0.3px #57636c;-webkit-text-stroke:0;">TextField</div>
<svg class="a" style="left:1786px;top:565px;" width="34" height="32" viewBox="0 0 24 24"><g fill="none" stroke="#57636c" stroke-width="1.9" stroke-linecap="round" stroke-linejoin="round"><path d="M9.88 9.88a3 3 0 1 0 4.24 4.24"/><path d="M10.73 5.08A10.43 10.43 0 0 1 12 5c7 0 10 7 10 7a13.16 13.16 0 0 1-1.67 2.68"/><path d="M6.61 6.61A13.526 13.526 0 0 0 2 12s3 7 10 7a9.74 9.74 0 0 0 5.39-1.61"/><path d="m2 2 20 20"/></g></svg>
<div class="a" style="left:1190px;top:508px;width:100px;height:36px;background:#4b9a8a;border-radius:7px 7px 0 0"></div>
<div class="a t" style="left:1198px;top:516.6px;font-size:20.5px;color:#ffffff;-webkit-text-stroke:0.3px #ffffff;">TextField</div>
<div class="a" style="left:1442px;top:632px;width:144px;height:72px;background:#e0874a;border-radius:14px;"></div>
<div class="a t" style="left:514px;width:2000px;text-align:center;top:657.1px;font-size:27px;color:#ffffff;font-weight:700;">Button</div>
<div class="a" style="left:1896px;top:213px;width:60px;height:60px;background:#2c313a;border-radius:14px;"></div>
<svg class="a" style="left:1910px;top:236px" width="32" height="16" viewBox="0 0 32 16"><rect x="1.5" y="2.5" width="29" height="11" rx="1.2" fill="none" stroke="#fff" stroke-width="2.4"/><rect x="10" y="5.8" width="12" height="4.4" fill="#fff"/><path d="M4.5 8h3M6 6.5v3" stroke="#fff" stroke-width="0.9"/></svg>
<div class="a" style="left:2365px;top:320px;width:551px;height:149px;border:2px solid #30353d;box-sizing:border-box;border-radius:20px;"></div>
<div class="a" style="left:2340px;top:105px;width:599px;height:248px;background:#15181b;"></div>
<svg class="a" style="left:2367px;top:121px;" width="26" height="26" viewBox="0 0 24 24"><g fill="none" stroke="#ffffff" stroke-width="2" stroke-linecap="round" stroke-linejoin="round"><path d="M12 3H5a2 2 0 0 0-2 2v14a2 2 0 0 0 2 2h14a2 2 0 0 0 2-2v-7"/><path d="M18.375 2.625a1 1 0 0 1 3 3l-9.013 9.014a2 2 0 0 1-.853.505l-2.873.84a.5.5 0 0 1-.62-.62l.84-2.873a2 2 0 0 1 .506-.852z"/></g></svg>
<div class="a t" style="left:2407px;top:119.8px;font-size:25px;color:#ffffff;font-weight:700;">TextField</div>
<div class="a" style="left:2364px;top:165px;width:323px;height:66px;background:#0a0d10;border:3px solid #353b45;box-sizing:border-box;border-radius:20px;"></div>
<div class="a t" style="left:2389px;top:184.6px;font-size:26.5px;color:#ffffff;-webkit-text-stroke:0.3px #ffffff;">TextField</div>
<div class="a" style="left:2700px;top:165px;width:64px;height:64px;background:#1e2227;border:3px solid #353b45;box-sizing:border-box;border-radius:16px;"></div>
<div class="a" style="left:2776px;top:165px;width:64px;height:64px;background:#1e2227;border:3px solid #353b45;box-sizing:border-box;border-radius:16px;"></div>
<div class="a" style="left:2852px;top:165px;width:64px;height:64px;background:#1e2227;border:3px solid #353b45;box-sizing:border-box;border-radius:16px;"></div>
<svg class="a" style="left:2716px;top:181px;" width="32" height="32" viewBox="0 0 24 24"><g fill="none" stroke="#ffffff" stroke-width="2" stroke-linecap="round" stroke-linejoin="round"><path d="M6 3h12l4 6-10 13L2 9Z"/><path d="M11 3 8 9l4 13 4-13-3-6"/><path d="M2 9h20"/></g></svg>
<svg class="a" style="left:2792px;top:181px;" width="36" height="36" viewBox="0 0 24 24"><g fill="none" stroke="#ffffff" stroke-width="2" stroke-linecap="round" stroke-linejoin="round"><path d="M10 2.4H5.2a3.5 3.5 0 0 0-3.5 3.5V17a3.5 3.5 0 0 0 3.5 3.5H16.3a3.5 3.5 0 0 0 3.5-3.5V11.3"/><path d="M16.5 1.4v7.4M12.8 5.1h7.4"/><circle cx="7.3" cy="7.7" r="2"/><circle cx="7.3" cy="14.6" r="2"/></g></svg>
<svg class="a" style="left:2864px;top:178px;" width="40" height="40" viewBox="0 0 60 60"><g fill="none" stroke="#ffffff" stroke-width="3.6" stroke-linecap="round" stroke-linejoin="round"><path d="M15.7 7.2H51.2L44.3 22.5H8.7Z"/><path d="M27.4 7.2 33.4 22.5"/><path d="M8.7 22.5 12.8 30.5H37.3L33.4 22.5"/><path d="M37.3 30.5 30.5 45.4H6.4L12.8 32"/><path d="M13.6 32.6 18.4 45.4"/><path d="M6.4 45.4 11.1 53.2 18.4 46.2"/></g></svg>
<div class="a" style="left:2365px;top:251px;width:551px;height:72px;background:#1f2328;border-radius:20px;"></div>
<div class="a" style="left:2368px;top:255px;width:102px;height:63px;background:#0f1113;border-radius:16px;"></div>
<svg class="a" style="left:2340px;top:255px" width="599" height="65" viewBox="2340 255 599 65"><g fill="none" stroke-linecap="round" stroke-linejoin="round">
<g stroke="#fff" stroke-width="3"><path d="M2400.5 297 2428 269.5 2439 280.5 2411.5 308Z"/><path d="M2407.4 290.1l2.6 2.6M2412 285.5l3.6 3.6M2416.5 281l2.6 2.6M2421.1 276.4l3.6 3.6"/><path d="M2406.5 284 2400.7 277.8 2408.8 270.2 2414.5 276"/><path d="M2430 293C2434 296.5 2437 301.5 2438.5 307.5 2432.5 306.5 2427.5 304 2423.5 300.5"/></g>
<g stroke="#9aa3ae" stroke-width="2.2"><path d="M2515 275.5C2519 281 2521.5 287 2521.5 292.5 2522.5 299 2528 302.5 2536.5 302.8"/><path d="M2532.2 270.8 2547.9 279.5 2531.6 288.2Z"/><path d="M2540.3 286 2545.2 293.5" stroke-width="2.6"/>
<rect x="2623.5" y="270.5" width="33.5" height="12.3" rx="3"/><rect x="2623.5" y="282.8" width="33.5" height="12.3" rx="3"/><rect x="2623.5" y="295.1" width="33.5" height="12.3" rx="3"/>
</g><g stroke="#9aa3ae" stroke-width="3"><path d="M2862 271.5H2850a6 6 0 0 0-6 6V300a6 6 0 0 0 6 6H2869a6 6 0 0 0 6-6V287"/><path d="M2852 280.6H2858.5M2852 288.6H2867M2852 296.3H2867" stroke-width="3.2"/><path d="M2872.7 270.5v11.5M2867 276.1H2878.5" stroke-width="3"/></g></g>
<g fill="#9aa3ae"><circle cx="2514.8" cy="275.1" r="4.4"/><circle cx="2536.5" cy="302.8" r="4.4"/><circle cx="2645.8" cy="276.6" r="1.9"/><circle cx="2651.2" cy="276.6" r="1.9"/><circle cx="2645.8" cy="288.9" r="1.9"/><circle cx="2651.2" cy="288.9" r="1.9"/><circle cx="2645.8" cy="301.2" r="1.9"/><circle cx="2651.2" cy="301.2" r="1.9"/><path d="M2743 274.9 2762.4 286.8 2743 299.2Z"/></g></svg>
<div class="a" style="left:2637px;top:353px;width:5px;height:11px;background:#9aa3ae;"></div>
<div class="a" style="left:2373px;top:376px;width:3px;height:24px;background:#9aa3ae;"></div>
<div class="a" style="left:2378px;top:380px;width:8px;height:16px;border:2px solid #9aa3ae;box-sizing:border-box;border-radius:4px;"></div>
<div class="a t" style="left:2440px;top:374.8px;font-size:25px;color:#9aa3ae;font-weight:700;">L</div>
<div class="a t" style="left:2827px;top:374.8px;font-size:25px;color:#9aa3ae;font-weight:700;">R</div>
<div class="a" style="left:2893px;top:380px;width:8px;height:16px;border:2px solid #9aa3ae;box-sizing:border-box;border-radius:4px;"></div>
<div class="a" style="left:2903px;top:376px;width:3px;height:24px;background:#9aa3ae;"></div>
<div class="a t" style="left:2632px;top:406.8px;font-size:25px;color:#9aa3ae;font-weight:700;">B</div>
<div class="a" style="left:2632px;top:449px;width:16px;height:7px;border:2px solid #9aa3ae;box-sizing:border-box;border-radius:4px;"></div>
<div class="a" style="left:2628px;top:457px;width:24px;height:3px;background:#9aa3ae;"></div>
<div class="a t" style="left:2365px;top:499.9px;font-size:24.3px;color:#9aa3ae;-webkit-text-stroke:0.3px #9aa3ae;">Dense</div>
<svg class="a" style="left:2445px;top:500px;" width="24" height="24" viewBox="0 0 24 24"><g fill="none" stroke="#5d6670" stroke-width="1.9" stroke-linecap="round" stroke-linejoin="round"><circle cx="12" cy="12" r="10"/><path d="M12 16v-5"/><path d="M12 7.5h.01"/></g></svg>
<svg class="a" style="left:2482px;top:497px;" width="30" height="30" viewBox="0 0 24 24"><g fill="none" stroke="#d08a60" stroke-width="1.9" stroke-linecap="round" stroke-linejoin="round"><circle cx="6" cy="6.5" r="2.6"/><path d="M12 6.5h8"/><path d="M4 17.5h8"/><circle cx="18" cy="17.5" r="2.6"/></g></svg>
<div class="a" style="left:2832px;top:487px;width:84px;height:49px;background:#4641dc;border-radius:25px;"></div>
<div class="a" style="left:2869px;top:489px;width:45px;height:45px;border-radius:50%;background:#fff"></div>
<div class="a t" style="left:2365px;top:567.1px;font-size:24.7px;color:#9aa3ae;-webkit-text-stroke:0.3px #9aa3ae;">Custom Error Style</div>
<svg class="a" style="left:2585px;top:568px;" width="24" height="24" viewBox="0 0 24 24"><g fill="none" stroke="#5d6670" stroke-width="1.9" stroke-linecap="round" stroke-linejoin="round"><circle cx="12" cy="12" r="10"/><path d="M12 16v-5"/><path d="M12 7.5h.01"/></g></svg>
<div class="a" style="left:2832px;top:555px;width:84px;height:49px;background:#14171a;border:2px solid #2d3238;box-sizing:border-box;border-radius:25px;"></div>
<div class="a" style="left:2835px;top:558px;width:44px;height:44px;border-radius:50%;background:#30353d"></div>
<div class="a" style="left:2340px;top:625px;width:599px;height:2px;background:#2d3238;"></div>
<div class="a t" style="left:2365px;top:653.7px;font-size:24px;color:#ffffff;font-weight:700;">Icon Properties</div>
<svg class="a" style="left:2547px;top:654px;" width="24" height="24" viewBox="0 0 24 24"><g fill="none" stroke="#5d6670" stroke-width="1.9" stroke-linecap="round" stroke-linejoin="round"><circle cx="12" cy="12" r="10"/><path d="M12 16v-5"/><path d="M12 7.5h.01"/></g></svg>
<svg class="a" style="left:2872px;top:641px;" width="50" height="50" viewBox="0 0 24 24"><g fill="none" stroke="#9aa3ae" stroke-width="1.25" stroke-linecap="round" stroke-linejoin="round"><path d="m9 18 6-6-6-6"/></g></svg>
<div class="a" style="left:2340px;top:703px;width:599px;height:2px;background:#2d3238;"></div>
<div class="a t" style="left:2365px;top:731.6px;font-size:24.1px;color:#ffffff;font-weight:700;">Additional Properties</div>
<svg class="a" style="left:2616px;top:731px;" width="24" height="24" viewBox="0 0 24 24"><g fill="none" stroke="#5d6670" stroke-width="1.9" stroke-linecap="round" stroke-linejoin="round"><circle cx="12" cy="12" r="10"/><path d="M12 16v-5"/><path d="M12 7.5h.01"/></g></svg>
<svg class="a" style="left:2874px;top:719px;" width="49" height="49" viewBox="0 0 24 24"><g fill="none" stroke="#9aa3ae" stroke-width="1.25" stroke-linecap="round" stroke-linejoin="round"><path d="m6 9 6 6 6-6"/></g></svg>
<div class="a t" style="left:2365px;top:791.0px;font-size:24.5px;color:#9aa3ae;-webkit-text-stroke:0.3px #9aa3ae;">Enabled</div>
<svg class="a" style="left:2464px;top:791px;" width="24" height="24" viewBox="0 0 24 24"><g fill="none" stroke="#5d6670" stroke-width="1.9" stroke-linecap="round" stroke-linejoin="round"><circle cx="12" cy="12" r="10"/><path d="M12 16v-5"/><path d="M12 7.5h.01"/></g></svg>
<svg class="a" style="left:2501px;top:788px;" width="30" height="30" viewBox="0 0 24 24"><g fill="none" stroke="#d08a60" stroke-width="1.9" stroke-linecap="round" stroke-linejoin="round"><circle cx="6" cy="6.5" r="2.6"/><path d="M12 6.5h8"/><path d="M4 17.5h8"/><circle cx="18" cy="17.5" r="2.6"/></g></svg>
<div class="a" style="left:2832px;top:779px;width:84px;height:49px;background:#4641dc;border-radius:25px;"></div>
<div class="a" style="left:2869px;top:781px;width:45px;height:45px;border-radius:50%;background:#fff"></div>
<div class="a" style="left:2351px;top:836px;width:588px;height:77px;border:5px solid #e5432b;box-sizing:border-box;"></div>
<div class="a t" style="left:2365px;top:859.6px;font-size:24.1px;color:#9aa3ae;-webkit-text-stroke:0.3px #9aa3ae;">Password Field</div>
<svg class="a" style="left:2541px;top:860px;" width="24" height="24" viewBox="0 0 24 24"><g fill="none" stroke="#5d6670" stroke-width="1.9" stroke-linecap="round" stroke-linejoin="round"><circle cx="12" cy="12" r="10"/><path d="M12 16v-5"/><path d="M12 7.5h.01"/></g></svg>
<div class="a" style="left:2832px;top:847px;width:84px;height:49px;background:#4641dc;border-radius:25px;"></div>
<div class="a" style="left:2869px;top:849px;width:45px;height:45px;border-radius:50%;background:#fff"></div>
<div class="a t" style="left:2365px;top:918.7px;font-size:25.2px;color:#9aa3ae;-webkit-text-stroke:0.3px #9aa3ae;-webkit-text-stroke:0.75px #9aa3ae;">Toggle Hide Password Icon</div>
<svg class="a" style="left:2680px;top:919px;" width="24" height="24" viewBox="0 0 24 24"><g fill="none" stroke="#5d6670" stroke-width="1.9" stroke-linecap="round" stroke-linejoin="round"><circle cx="12" cy="12" r="10"/><path d="M12 16v-5"/><path d="M12 7.5h.01"/></g></svg>
<svg class="a" style="left:2874px;top:906px;" width="49" height="49" viewBox="0 0 24 24"><g fill="none" stroke="#9aa3ae" stroke-width="1.25" stroke-linecap="round" stroke-linejoin="round"><path d="m6 9 6 6 6-6"/></g></svg>
<div class="a t" style="left:2365px;top:969.9px;font-size:23.7px;color:#9aa3ae;-webkit-text-stroke:0.3px #9aa3ae;">Icon Size</div>
<svg class="a" style="left:2470px;top:967px;" width="30" height="30" viewBox="0 0 24 24"><g fill="none" stroke="#d08a60" stroke-width="1.9" stroke-linecap="round" stroke-linejoin="round"><circle cx="6" cy="6.5" r="2.6"/><path d="M12 6.5h8"/><path d="M4 17.5h8"/><circle cx="18" cy="17.5" r="2.6"/></g></svg>
<div class="a t" style="left:2652px;top:968.8px;font-size:25px;color:#9aa3ae;-webkit-text-stroke:0.3px #9aa3ae;">Icon Color</div>
<svg class="a" style="left:2774px;top:967px;" width="30" height="30" viewBox="0 0 24 24"><g fill="none" stroke="#d08a60" stroke-width="1.9" stroke-linecap="round" stroke-linejoin="round"><circle cx="6" cy="6.5" r="2.6"/><path d="M12 6.5h8"/><path d="M4 17.5h8"/><circle cx="18" cy="17.5" r="2.6"/></g></svg>
<div class="a" style="left:2365px;top:1006px;width:262px;height:63px;border:2px solid #30353d;box-sizing:border-box;border-radius:16px;"></div>
<div class="a" style="left:2652px;top:1006px;width:264px;height:63px;border:2px solid #30353d;box-sizing:border-box;border-radius:16px;"></div>
<div class="a" style="left:2670px;top:1027px;width:24px;height:23px;border:2px solid #9aa3ae;box-sizing:border-box;border-radius:5px;"></div>
<div class="a t" style="left:2718px;top:1025.1px;font-size:24.7px;color:#ffffff;-webkit-text-stroke:0.3px #ffffff;-webkit-text-stroke:0.6px #fff;">Unset</div>
<div class="a t" style="left:2365px;top:1098.1px;font-size:25.9px;color:#9aa3ae;-webkit-text-stroke:0.3px #9aa3ae;">Autofocus</div>
<svg class="a" style="left:2492px;top:1100px;" width="24" height="24" viewBox="0 0 24 24"><g fill="none" stroke="#5d6670" stroke-width="1.9" stroke-linecap="round" stroke-linejoin="round"><circle cx="12" cy="12" r="10"/><path d="M12 16v-5"/><path d="M12 7.5h.01"/></g></svg>
<svg class="a" style="left:2528px;top:1097px;" width="30" height="30" viewBox="0 0 24 24"><g fill="none" stroke="#d08a60" stroke-width="1.9" stroke-linecap="round" stroke-linejoin="round"><circle cx="6" cy="6.5" r="2.6"/><path d="M12 6.5h8"/><path d="M4 17.5h8"/><circle cx="18" cy="17.5" r="2.6"/></g></svg>
<div class="a" style="left:2832px;top:1088px;width:84px;height:49px;background:#14171a;border:2px solid #2d3238;box-sizing:border-box;border-radius:25px;"></div>
<div class="a" style="left:2835px;top:1091px;width:44px;height:44px;border-radius:50%;background:#30353d"></div>
<div class="a t" style="left:2365px;top:1167.0px;font-size:24.8px;color:#9aa3ae;-webkit-text-stroke:0.3px #9aa3ae;">Enable Interactive Selection</div>
<svg class="a" style="left:2684px;top:1168px;" width="24" height="24" viewBox="0 0 24 24"><g fill="none" stroke="#5d6670" stroke-width="1.9" stroke-linecap="round" stroke-linejoin="round"><circle cx="12" cy="12" r="10"/><path d="M12 16v-5"/><path d="M12 7.5h.01"/></g></svg>
<svg class="a" style="left:2721px;top:1165px;" width="30" height="30" viewBox="0 0 24 24"><g fill="none" stroke="#d08a60" stroke-width="1.9" stroke-linecap="round" stroke-linejoin="round"><circle cx="6" cy="6.5" r="2.6"/><path d="M12 6.5h8"/><path d="M4 17.5h8"/><circle cx="18" cy="17.5" r="2.6"/></g></svg>
<div class="a" style="left:2832px;top:1156px;width:84px;height:49px;background:#4641dc;border-radius:25px;"></div>
<div class="a" style="left:2869px;top:1158px;width:45px;height:45px;border-radius:50%;background:#fff"></div>
<div class="a t" style="left:2365px;top:1234.0px;font-size:26px;color:#9aa3ae;-webkit-text-stroke:0.3px #9aa3ae;">Autocomplete</div>
<svg class="a" style="left:2535px;top:1236px;" width="24" height="24" viewBox="0 0 24 24"><g fill="none" stroke="#5d6670" stroke-width="1.9" stroke-linecap="round" stroke-linejoin="round"><circle cx="12" cy="12" r="10"/><path d="M12 16v-5"/><path d="M12 7.5h.01"/></g></svg>
<div class="a" style="left:2832px;top:1223px;width:84px;height:49px;background:#14171a;border:2px solid #2d3238;box-sizing:border-box;border-radius:25px;"></div>
<div class="a" style="left:2835px;top:1226px;width:44px;height:44px;border-radius:50%;background:#30353d"></div>
<div class="a t" style="left:2365px;top:1303.0px;font-size:24.8px;color:#9aa3ae;-webkit-text-stroke:0.3px #9aa3ae;">Auto Fill Hint</div>
<svg class="a" style="left:2516px;top:1304px;" width="24" height="24" viewBox="0 0 24 24"><g fill="none" stroke="#5d6670" stroke-width="1.9" stroke-linecap="round" stroke-linejoin="round"><circle cx="12" cy="12" r="10"/><path d="M12 16v-5"/><path d="M12 7.5h.01"/></g></svg>
<div class="a" style="left:2832px;top:1292px;width:84px;height:49px;background:#14171a;border:2px solid #2d3238;box-sizing:border-box;border-radius:25px;"></div>
<div class="a" style="left:2835px;top:1295px;width:44px;height:44px;border-radius:50%;background:#30353d"></div>
<div class="a t" style="left:2365px;top:1360.3px;font-size:24.4px;color:#9aa3ae;-webkit-text-stroke:0.3px #9aa3ae;">Update Page On Focus</div>
<div class="a t" style="left:2365px;top:1392.0px;font-size:24.8px;color:#9aa3ae;-webkit-text-stroke:0.3px #9aa3ae;">Change</div>
<svg class="a" style="left:2631px;top:1378px;" width="24" height="24" viewBox="0 0 24 24"><g fill="none" stroke="#5d6670" stroke-width="1.9" stroke-linecap="round" stroke-linejoin="round"><circle cx="12" cy="12" r="10"/><path d="M12 16v-5"/><path d="M12 7.5h.01"/></g></svg>
<svg class="a" style="left:2668px;top:1376px;" width="30" height="30" viewBox="0 0 24 24"><g fill="none" stroke="#d08a60" stroke-width="1.9" stroke-linecap="round" stroke-linejoin="round"><circle cx="6" cy="6.5" r="2.6"/><path d="M12 6.5h8"/><path d="M4 17.5h8"/><circle cx="18" cy="17.5" r="2.6"/></g></svg>
<div class="a" style="left:2832px;top:1365px;width:84px;height:49px;background:#14171a;border:2px solid #2d3238;box-sizing:border-box;border-radius:25px;"></div>
<div class="a" style="left:2835px;top:1368px;width:44px;height:44px;border-radius:50%;background:#30353d"></div>
<div class="a t" style="left:2365px;top:1449.8px;font-size:24.7px;color:#9aa3ae;-webkit-text-stroke:0.3px #9aa3ae;">Update Page On Text Change</div>
<svg class="a" style="left:2705px;top:1451px;" width="24" height="24" viewBox="0 0 24 24"><g fill="none" stroke="#5d6670" stroke-width="1.9" stroke-linecap="round" stroke-linejoin="round"><circle cx="12" cy="12" r="10"/><path d="M12 16v-5"/><path d="M12 7.5h.01"/></g></svg>
<div class="a" style="left:2832px;top:1440px;width:84px;height:49px;background:#14171a;border:2px solid #2d3238;box-sizing:border-box;border-radius:25px;"></div>
<div class="a" style="left:2835px;top:1443px;width:44px;height:44px;border-radius:50%;background:#30353d"></div>
<div class="a t" style="left:2365px;top:1509.6px;font-size:24.15px;color:#9aa3ae;-webkit-text-stroke:0.3px #9aa3ae;">Read Only</div>
<svg class="a" style="left:2487px;top:1508px;" width="30" height="30" viewBox="0 0 24 24"><g fill="none" stroke="#d08a60" stroke-width="1.9" stroke-linecap="round" stroke-linejoin="round"><circle cx="6" cy="6.5" r="2.6"/><path d="M12 6.5h8"/><path d="M4 17.5h8"/><circle cx="18" cy="17.5" r="2.6"/></g></svg>
<div class="a" style="left:2366px;top:1560px;width:36px;height:36px;border:3px solid #363c46;box-sizing:border-box;border-radius:7px;"></div>
<div class="a t" style="left:2417px;top:1565.4px;font-size:24.3px;color:#9aa3ae;font-weight:700;">Read Only</div>
<div class="a" style="left:2804px;top:1524px;width:96px;height:96px;border-radius:50%;background:#4a3ae6;box-shadow:0 2px 10px rgba(0,0,0,.3)"></div>
<svg class="a" style="left:2800px;top:1520px" width="110" height="110" viewBox="2800 1520 110 110"><path d="M2835 1547.8H2869a4 4 0 0 1 4 4V1596L2860.4 1590.8H2835a4 4 0 0 1-4-4V1551.8a4 4 0 0 1 4-4Z" fill="#fff"/><path d="M2837.3 1578C2846 1586 2858 1586 2866.5 1578.3" fill="none" stroke="#4a3ae6" stroke-width="2.6" stroke-linecap="round"/></svg>
<div class="a t" style="left:2365px;top:1628.8px;font-size:25px;color:#9aa3ae;-webkit-text-stroke:0.3px #9aa3ae;">Cursor Color</div>
<svg class="a" style="left:2515px;top:1628px;" width="30" height="30" viewBox="0 0 24 24"><g fill="none" stroke="#d08a60" stroke-width="1.9" stroke-linecap="round" stroke-linejoin="round"><circle cx="6" cy="6.5" r="2.6"/><path d="M12 6.5h8"/><path d="M4 17.5h8"/><circle cx="18" cy="17.5" r="2.6"/></g></svg>
</body></html>
